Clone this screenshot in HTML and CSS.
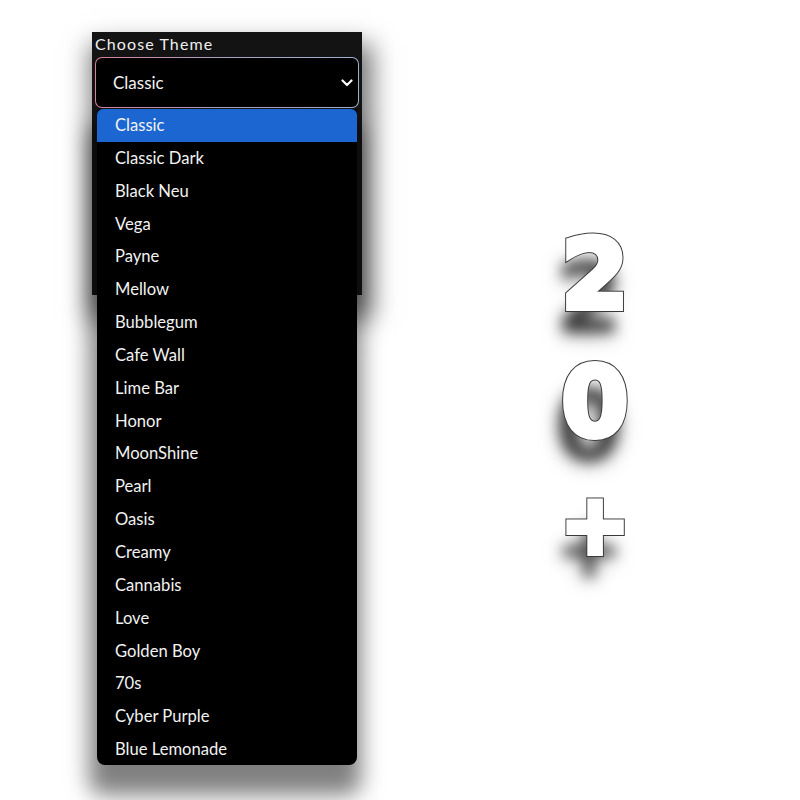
FILE: index.html
```html
<!DOCTYPE html>
<html>
<head>
<meta charset="utf-8">
<link rel="stylesheet" href="styles.css">
</head>
<body>
<div class="stage">
  <div class="left">
    <div class="panel">
      <div class="label">Choose Theme</div>
      <div class="select">
        <span>Classic</span>
        <svg class="chev" width="12" height="8" viewBox="0 0 12 8"><path d="M1.5 1.5 L6 6 L10.5 1.5" fill="none" stroke="#fff" stroke-width="2.2" stroke-linecap="round" stroke-linejoin="round"/></svg>
      </div>
      <ul class="menu">
        <li class="active">Classic</li>
        <li>Classic Dark</li>
        <li>Black Neu</li>
        <li>Vega</li>
        <li>Payne</li>
        <li>Mellow</li>
        <li>Bubblegum</li>
        <li>Cafe Wall</li>
        <li>Lime Bar</li>
        <li>Honor</li>
        <li>MoonShine</li>
        <li>Pearl</li>
        <li>Oasis</li>
        <li>Creamy</li>
        <li>Cannabis</li>
        <li>Love</li>
        <li>Golden Boy</li>
        <li>70s</li>
        <li>Cyber Purple</li>
        <li>Blue Lemonade</li>
      </ul>
    </div>
  </div>
  <div class="right">
    <div class="big" data-c="2">2</div>
    <div class="big" data-c="0">0</div>
    <div class="big plus" data-c="+">+</div>
  </div>
</div>
</body>
</html>
```
FILE: styles.css
```css
html, body {
  margin: 0;
  padding: 0;
  background: #fff;
}
.stage {
  display: flex;
  padding-top: 32px;
  width: 800px;
  height: 800px;
  box-sizing: border-box;
  overflow: hidden;
}
.left {
  margin-left: 92px;
  width: 270px;
}
.panel {
  position: relative;
  width: 270px;
  height: 263px;
  background: #131313;
  box-sizing: border-box;
  padding: 3px 3px 0 3px;
  box-shadow: 4px 18px 24px 6px rgba(0,0,0,0.55);
}
.label {
  font-family: Lato, "Noto Sans", sans-serif;
  color: #eee;
  font-size: 16px;
  letter-spacing: 1.1px;
  line-height: 18px;
  height: 22px;
}
.select {
  height: 51px;
  border: 1.5px solid transparent;
  border-radius: 7px;
  background:
    linear-gradient(#000, #000) padding-box,
    linear-gradient(90deg, #d9809f, #a7a3c3 50%, #9fb0cf) border-box;
  box-sizing: border-box;
  display: flex;
  align-items: center;
  justify-content: space-between;
  padding: 0 5px 0 17px;
  font-family: Lato, "Noto Sans", sans-serif;
  font-size: 17px;
  color: #f2f2f2;
}
.chev {
  margin-top: 1px;
}
.menu {
  position: absolute;
  left: 5px;
  top: 77px;
  width: 260px;
  height: 656px;
  margin: 0;
  padding: 0;
  list-style: none;
  background: #000;
  border-radius: 0 0 8px 8px;
  box-shadow: -2px 24px 22px 6px rgba(0,0,0,0.5);
  font-family: Lato, "Noto Sans", sans-serif;
  font-size: 16.6px;
  color: #f2f2f2;
}
.menu li {
  height: 32.85px;
  line-height: 32.85px;
  padding-left: 18px;
}
.menu li.active {
  background: #1b66d0;
  border-radius: 6px 6px 0 0;
}
.right {
  margin-left: 178px;
  width: 110px;
  display: flex;
  flex-direction: column;
  align-items: center;
  padding-top: 195px;
  gap: 32px;
}
.big {
  position: relative;
  font-family: "DejaVu Sans", sans-serif;
  font-weight: bold;
  font-size: 96px;
  line-height: 96px;
  height: 96px;
  color: #fff;
  -webkit-text-stroke: 8px #3a3a3a;
  text-shadow: -6px 24px 14px rgba(0,0,0,0.7), -6px 26px 22px rgba(0,0,0,0.35);
}
.big.plus {
  font-size: 82px;
  margin-top: -6px;
}
.big::after {
  content: attr(data-c);
  position: absolute;
  left: 0;
  top: 0;
  color: #fff;
  -webkit-text-stroke: 6px #fff;
  text-shadow: none;
}
```
